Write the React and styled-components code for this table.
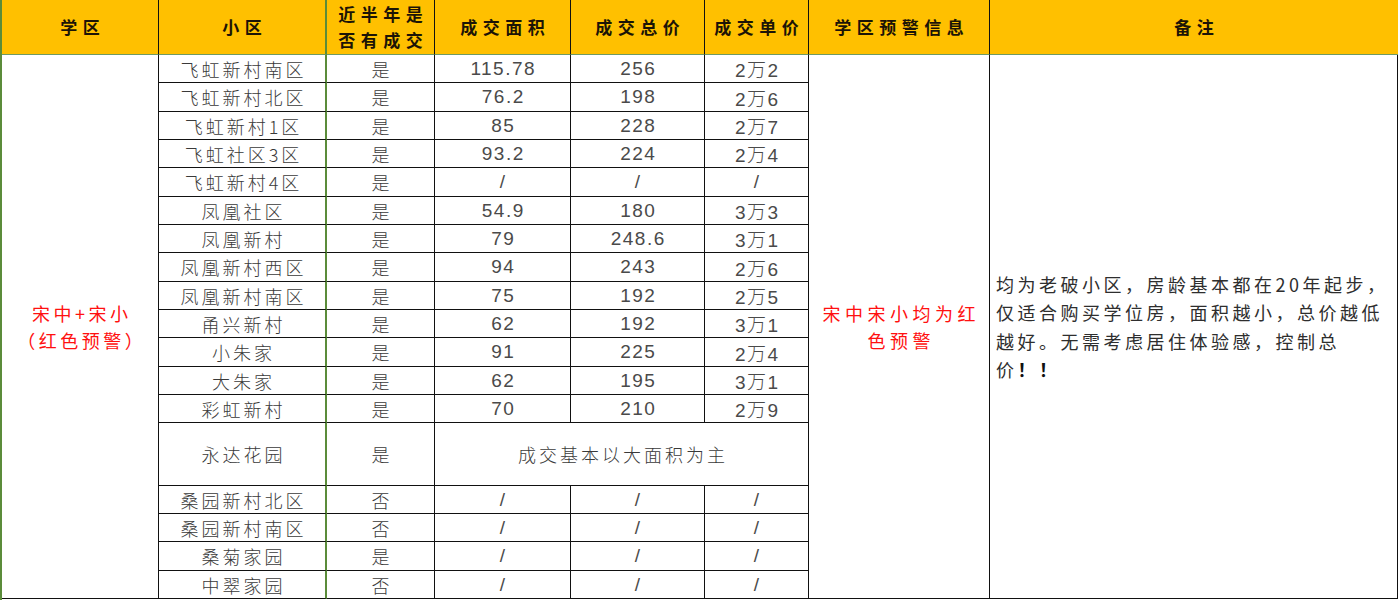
import React from "react";
import styled, { createGlobalStyle } from "styled-components";

const GREEN = "#5b8c3a";

const GlobalStyle = createGlobalStyle`
  html, body {
    margin: 0;
    padding: 0;
    background: #fff;
  }
`;

const columns = [157, 168, 108, 136, 134, 104, 181, 408];
const bodyHeights = [28, 29, 28, 28, 29, 28, 28, 29, 28, 28, 29, 28, 28, 63, 28, 28, 29, 28];

const Sheet = styled.div`
  display: grid;
  grid-template-columns: ${columns.map((c) => c + "px").join(" ")};
  grid-template-rows: 55px ${bodyHeights.map((h) => h + "px").join(" ")};
  width: 1398px;
  height: 600px;
  box-sizing: border-box;
  border-left: 2px solid ${GREEN};
  overflow: hidden;
  font-family: "Liberation Sans", "Noto Sans CJK SC", sans-serif;
`;

const HeadCell = styled.div`
  box-sizing: border-box;
  display: flex;
  align-items: center;
  justify-content: center;
  text-align: center;
  background: #ffc000;
  color: #1c1406;
  font-family: "Noto Sans CJK SC", sans-serif;
  font-weight: 700;
  font-size: 17px;
  line-height: 26px;
  letter-spacing: 5.5px;
  padding-left: 5.5px;
  border-bottom: 1px solid #6f9a63;
  border-right: ${(p) =>
    p.$divider ? `2px solid ${GREEN}` : p.$last ? "none" : "1px solid #111"};
`;

const Cell = styled.div`
  box-sizing: border-box;
  display: flex;
  align-items: center;
  justify-content: center;
  text-align: center;
  color: ${(p) => (p.$num ? "#4a4a4a" : "#3a3a3a")};
  font-family: ${(p) =>
    p.$num
      ? `"Liberation Sans", "Noto Sans CJK SC", sans-serif`
      : `"Noto Sans CJK SC", sans-serif`};
  font-weight: 300;
  font-size: ${(p) => (p.$num ? "19px" : "18px")};
  letter-spacing: ${(p) => (p.$num ? "1.5px" : "3px")};
  padding-left: ${(p) => (p.$num ? "1.5px" : "3px")};
  border-bottom: 1px solid #111;
  border-right: ${(p) => (p.$divider ? `2px solid ${GREEN}` : "1px solid #111")};
  grid-column: ${(p) => (p.$cols ? `span ${p.$cols}` : "auto")};
  grid-row: ${(p) => (p.$rows ? `span ${p.$rows}` : "auto")};
`;

const AlertCell = styled(Cell)`
  color: #ff1010;
  font-weight: 400;
  line-height: 27px;
  letter-spacing: ${(p) => p.$spacing || "3.5px"};
  padding-left: ${(p) => p.$spacing || "3.5px"};
`;

const NoteCell = styled(Cell)`
  justify-content: flex-start;
  text-align: left;
  color: #2e2e2e;
  font-weight: 400;
  font-size: 18px;
  line-height: 28.4px;
  letter-spacing: 3.5px;
  padding: 0 0 0 6px;
`;

const Bang = styled.span`
  font-weight: 700;
  color: #111;
`;

const headers = [
  ["学区"],
  ["小区"],
  ["近半年是", "否有成交"],
  ["成交面积"],
  ["成交总价"],
  ["成交单价"],
  ["学区预警信息"],
  ["备注"],
];

const rows = [
  ["飞虹新村南区", "是", "115.78", "256", "2万2"],
  ["飞虹新村北区", "是", "76.2", "198", "2万6"],
  ["飞虹新村1区", "是", "85", "228", "2万7"],
  ["飞虹社区3区", "是", "93.2", "224", "2万4"],
  ["飞虹新村4区", "是", "/", "/", "/"],
  ["凤凰社区", "是", "54.9", "180", "3万3"],
  ["凤凰新村", "是", "79", "248.6", "3万1"],
  ["凤凰新村西区", "是", "94", "243", "2万6"],
  ["凤凰新村南区", "是", "75", "192", "2万5"],
  ["甬兴新村", "是", "62", "192", "3万1"],
  ["小朱家", "是", "91", "225", "2万4"],
  ["大朱家", "是", "62", "195", "3万1"],
  ["彩虹新村", "是", "70", "210", "2万9"],
  ["永达花园", "是", "成交基本以大面积为主"],
  ["桑园新村北区", "否", "/", "/", "/"],
  ["桑园新村南区", "否", "/", "/", "/"],
  ["桑菊家园", "是", "/", "/", "/"],
  ["中翠家园", "否", "/", "/", "/"],
];

function Lines({ lines }) {
  return (
    <div>
      {lines.map((l, i) => (
        <div key={i}>{l}</div>
      ))}
    </div>
  );
}

export default function App() {
  return (
    <>
      <GlobalStyle />
      <Sheet>
        {headers.map((h, i) => (
          <HeadCell key={i} $divider={i === 1} $last={i === 7}>
            <Lines lines={h} />
          </HeadCell>
        ))}

        {rows.map((r, i) => (
          <React.Fragment key={i}>
            {i === 0 && (
              <AlertCell $rows={rows.length}>
                <Lines lines={["宋中+宋小", "（红色预警）"]} />
              </AlertCell>
            )}
            <Cell $divider>{r[0]}</Cell>
            <Cell>{r[1]}</Cell>
            {r.length === 3 ? (
              <Cell $cols={3}>{r[2]}</Cell>
            ) : (
              <>
                <Cell $num>{r[2]}</Cell>
                <Cell $num>{r[3]}</Cell>
                <Cell $num>{r[4]}</Cell>
              </>
            )}
            {i === 0 && (
              <>
                <AlertCell $rows={rows.length} $spacing="4.5px">
                  <Lines lines={["宋中宋小均为红", "色预警"]} />
                </AlertCell>
                <NoteCell $rows={rows.length}>
                  <div>
                    <div>均为老破小区，房龄基本都在20年起步，</div>
                    <div>仅适合购买学位房，面积越小，总价越低</div>
                    <div>越好。无需考虑居住体验感，控制总</div>
                    <div>
                      价<Bang>！！</Bang>
                    </div>
                  </div>
                </NoteCell>
              </>
            )}
          </React.Fragment>
        ))}
      </Sheet>
    </>
  );
}
